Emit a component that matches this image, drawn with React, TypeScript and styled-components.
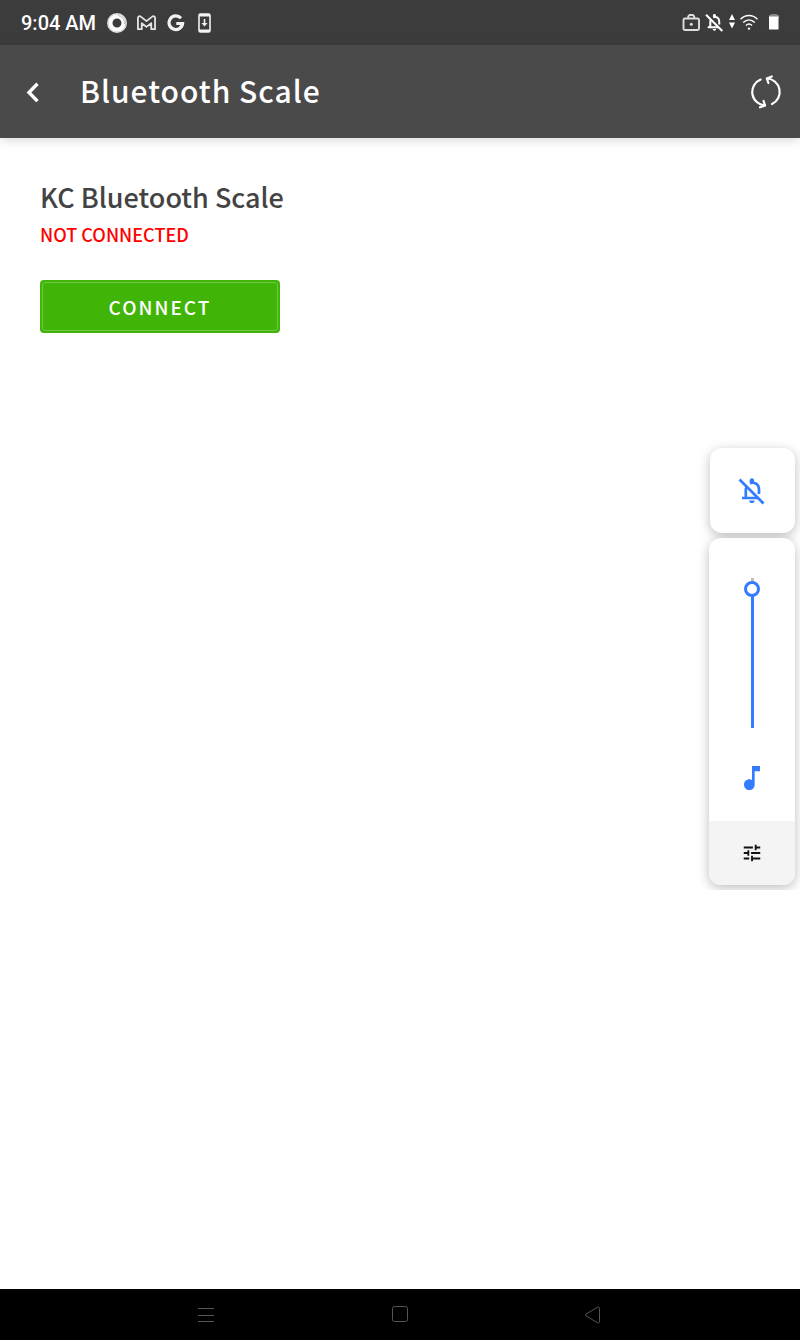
import React, { useState } from "react";
import styled, { createGlobalStyle } from "styled-components";
import { MdTune, MdMusicNote } from "react-icons/md";

const GlobalStyle = createGlobalStyle`
  *, *::before, *::after { box-sizing: border-box; }
  body {
    margin: 0;
    background: #ffffff;
    color: #434343;
    font-family: "Noto Sans CJK SC", "Noto Sans", sans-serif;
  }
  svg { display: block; flex: none; }
`;

const Screen = styled.div`
  position: relative;
  display: flex;
  flex-direction: column;
  min-height: 100vh;
`;

const StatusBar = styled.div`
  display: flex;
  align-items: center;
  justify-content: space-between;
  height: 45px;
  padding: 0 21px;
  background: #3c3c3c;
  color: #ffffff;
`;

const StatusGroup = styled.div<{ $gap: number }>`
  display: flex;
  align-items: center;
  gap: ${(p) => p.$gap}px;
`;

const Clock = styled.time`
  font: 500 20px/24px Roboto, sans-serif;
`;

const Header = styled.header`
  display: flex;
  align-items: center;
  height: 93px;
  padding: 0 16px;
  background: #4a4a4a;
  color: #ffffff;
  box-shadow: 0 2px 10px rgba(0, 0, 0, 0.16);
`;

const IconButton = styled.button`
  display: grid;
  place-items: center;
  width: 36px;
  height: 48px;
  padding: 0;
  border: 0;
  background: none;
  color: inherit;
  cursor: pointer;
`;

const Title = styled.h1`
  flex: 1;
  margin: 0 0 0 28px;
  padding-bottom: 4px;
  font-size: 30px;
  line-height: 44px;
  font-weight: 500;
  letter-spacing: 1px;
`;

const Main = styled.main`
  flex: 1;
  padding: 40px;
`;

const DeviceName = styled.h2`
  margin: 0;
  font-size: 27px;
  line-height: 38px;
  font-weight: 500;
`;

const DeviceStatus = styled.p`
  margin: 6px 0 34px;
  color: #ff0000;
  font-size: 18px;
  line-height: 24px;
  font-weight: 500;
`;

const ConnectButton = styled.button`
  display: block;
  width: 240px;
  height: 53px;
  padding: 2px;
  border: 0;
  border-radius: 4px;
  background: #41b408;
  color: #ffffff;
  font: inherit;
  font-size: 19px;
  line-height: 47px;
  font-weight: 500;
  letter-spacing: 2px;
  cursor: pointer;
`;

const ConnectLabel = styled.span`
  display: block;
  border: 1px solid #6fc744;
  border-radius: 3px;
`;

const VolumeOverlay = styled.aside`
  position: absolute;
  top: 438px;
  right: 0;
  display: flex;
  flex-direction: column;
  align-items: flex-end;
  gap: 5px;
  padding: 10px 5px 5px 20px;
  overflow: hidden;
`;

const RingerCard = styled.button`
  display: grid;
  place-items: center;
  width: 85px;
  height: 85px;
  padding: 0 2px 0 0;
  border: 0;
  border-radius: 12px;
  background: #ffffff;
  color: #347cff;
  box-shadow: 0 3px 12px rgba(0, 0, 0, 0.26);
  cursor: pointer;
`;

const VolumeCard = styled.div`
  display: flex;
  flex-direction: column;
  align-items: center;
  width: 86px;
  padding-top: 40px;
  border-radius: 12px;
  background: #ffffff;
  color: #347cff;
  box-shadow: 0 3px 12px rgba(0, 0, 0, 0.26);
`;

const VolumeSlider = styled.input`
  appearance: none;
  writing-mode: vertical-lr;
  direction: rtl;
  width: 16px;
  height: 150px;
  margin: 0 0 34px;
  background: none;

  &::-webkit-slider-runnable-track {
    width: 3px;
    background: linear-gradient(#bdbdbd 4px, #347cff 4px);
  }
  &::-webkit-slider-thumb {
    appearance: none;
    width: 16px;
    height: 16px;
    margin-left: -7px;
    border: 3px solid #347cff;
    border-radius: 50%;
    background: #ffffff;
  }
`;

const SettingsButton = styled.button`
  display: grid;
  place-items: center;
  width: 100%;
  height: 64px;
  margin-top: 27px;
  padding: 0;
  border: 0;
  border-radius: 0 0 12px 12px;
  background: #f4f4f4;
  color: #111111;
  cursor: pointer;
`;

const NavBar = styled.nav`
  display: flex;
  align-items: center;
  justify-content: center;
  gap: 158px;
  height: 51px;
  background: #000000;
  color: #555555;
`;

const BellOff = ({ size, weight }: { size: number; weight: number }) => (
  <svg width={size} height={size} viewBox="0 0 28 28" fill="none" stroke="currentColor" strokeWidth={weight} aria-hidden="true">
    <path d="M1.500 2.500 25.500 26.500" />
    <path d="M4 21H20.500M7.800 21V13Q7.800 11 9 9.500M12 6.300C17 4.500 21 7.500 21 12.500V17" />
    <path d="M11.700 5.500V3.500a2.200 2.200 0 0 1 4.400 0v2Z" fill="currentColor" stroke="none" />
    <path d="M11.300 23.500h5.200a2.600 2.600 0 0 1-5.200 0Z" fill="currentColor" stroke="none" />
  </svg>
);

const ChatRing = () => (
  <svg width="20" height="20" viewBox="0 0 20 20" fill="none" aria-hidden="true">
    <circle cx="10" cy="10" r="9.300" stroke="#dcdcdc" strokeWidth="1.400" />
    <circle cx="10" cy="10" r="6.600" stroke="#fff" strokeWidth="4.200" />
    <path d="M11 2.500a7.500 7.500 0 0 1 6.500 8.500" stroke="#aaa" strokeWidth=".8" />
  </svg>
);

const Mail = () => (
  <svg width="19" height="16" viewBox="0 0 20 16" fill="none" stroke="#e6e6e6" strokeWidth="1.900" strokeLinejoin="round" aria-hidden="true">
    <path d="M1 14.500V2.600C1 .9 2.800.3 4 1.300L10 6l6-4.700c1.200-1 3-.4 3 1.300v11.900h-4V8.200l-5 3.900-5-3.900v6.300Z" />
  </svg>
);

const SearchG = () => (
  <svg width="20" height="18" viewBox="-1 0 20 18" fill="none" stroke="#f2f2f2" strokeWidth="3.200" aria-hidden="true">
    <path d="M14 4.300A6.800 6.800 0 1 0 15.600 9.500H9.300" />
  </svg>
);

const PhoneDownload = () => (
  <svg width="18" height="20" viewBox="-2 0 18 20" fill="none" aria-hidden="true">
    <rect x="1" y="1" width="11" height="18" rx="1.500" stroke="#f2f2f2" strokeWidth="1.600" />
    <path d="M1 2.200h11M1 17.800h11" stroke="#f2f2f2" strokeWidth="2.400" />
    <path d="M6.500 6v6" stroke="#f2f2f2" strokeWidth="1.600" />
    <path d="M3.400 10h6.200L6.500 13.400Z" fill="#f2f2f2" />
  </svg>
);

const Briefcase = () => (
  <svg width="18" height="18" viewBox="0 0 18 18" fill="none" stroke="#dedede" strokeWidth="1.900" aria-hidden="true">
    <rect x="1.500" y="4.500" width="15.500" height="11.500" rx="1.500" />
    <path d="M6.300 4.500V2.300L7.600 1h3.300L12.200 2.300V4.500" />
    <circle cx="9.300" cy="10.200" r="1.500" fill="#dedede" stroke="none" />
  </svg>
);

const DataArrows = () => (
  <svg width="6" height="18" viewBox="0 0 6 18" fill="#fff" aria-hidden="true">
    <path d="M3 0 6 6H0ZM0 8.500h6l-3 6Z" />
  </svg>
);

const Wifi = () => (
  <svg width="18" height="18" viewBox="0 0 18 18" fill="none" stroke="#fff" strokeWidth="1.400" aria-hidden="true">
    <path d="M.5 5.200C5.500.3 12.500.3 17.500 5.200M3.200 8.400c3.500-3.300 8.100-3.300 11.600 0M5.900 11.400c1.900-1.700 4.300-1.700 6.200 0" />
    <circle cx="9" cy="14.600" r="1.200" fill="#fff" stroke="none" />
  </svg>
);

const Battery = () => (
  <svg width="16" height="18" viewBox="-6 0 16 18" aria-hidden="true">
    <path d="M2 0h6v1h2v3H0V1h2Z" fill="#888" />
    <path d="M0 2.500h9.500V15.500H0Z" fill="#fff" />
  </svg>
);

const Chevron = () => (
  <svg width="16" height="20" viewBox="0 0 16 20" fill="none" stroke="currentColor" strokeWidth="3.400" aria-hidden="true">
    <path d="M11.500 1.800 3 10.500 11.500 19.200" />
  </svg>
);

const Refresh = () => (
  <svg width="32" height="34" viewBox="0 0 32 34" fill="none" stroke="currentColor" strokeWidth="2.200" strokeLinecap="round" strokeLinejoin="round" aria-hidden="true">
    <path d="M10.600 4.600A13.400 13.400 0 0 0 15 30.400" />
    <path d="M13.600 26 15 30.400 10 32.300" />
    <path d="M22 29A13.400 13.400 0 0 0 17 3.500" />
    <path d="M18.400 8 16.800 3.500 21.800 1.500" />
  </svg>
);

export default function App() {
  const [volume, setVolume] = useState(98);
  return (
    <>
      <GlobalStyle />
      <Screen>
        <StatusBar>
          <StatusGroup $gap={11}>
            <Clock>9:04 AM</Clock>
            <StatusGroup $gap={10}>
              <ChatRing />
              <Mail />
              <SearchG />
              <PhoneDownload />
            </StatusGroup>
          </StatusGroup>
          <StatusGroup $gap={5}>
            <Briefcase />
            <BellOff size={19} weight={3} />
            <DataArrows />
            <Wifi />
            <Battery />
          </StatusGroup>
        </StatusBar>
        <Header>
          <IconButton aria-label="Back">
            <Chevron />
          </IconButton>
          <Title>Bluetooth Scale</Title>
          <IconButton aria-label="Refresh">
            <Refresh />
          </IconButton>
        </Header>
        <Main>
          <DeviceName>KC Bluetooth Scale</DeviceName>
          <DeviceStatus>NOT CONNECTED</DeviceStatus>
          <ConnectButton>
            <ConnectLabel>CONNECT</ConnectLabel>
          </ConnectButton>
        </Main>
        <VolumeOverlay>
          <RingerCard aria-label="Ringer off">
            <BellOff size={28} weight={2.7} />
          </RingerCard>
          <VolumeCard>
            <VolumeSlider
              type="range"
              aria-label="Media volume"
              min={0}
              max={100}
              value={volume}
              onChange={(e) => setVolume(Number(e.target.value))}
            />
            <MdMusicNote size={32} aria-hidden="true" />
            <SettingsButton aria-label="Sound settings">
              <MdTune size={22} />
            </SettingsButton>
          </VolumeCard>
        </VolumeOverlay>
        <NavBar>
          <IconButton aria-label="Recent apps">
            <svg width="18" height="18" viewBox="0 0 18 18" stroke="currentColor" aria-hidden="true">
              <path d="M1 2.500h16M1 9.500h16M1 15.500h16" />
            </svg>
          </IconButton>
          <IconButton aria-label="Home">
            <svg width="18" height="18" viewBox="0 0 18 18" fill="none" stroke="currentColor" aria-hidden="true">
              <rect x="1.500" y=".5" width="15" height="15" rx="2" />
            </svg>
          </IconButton>
          <IconButton aria-label="Back to previous screen">
            <svg width="18" height="18" viewBox="0 0 18 18" fill="none" stroke="currentColor" strokeLinejoin="round" aria-hidden="true">
              <path d="M1 8 12.500 1.300q2-.8 2 1.200v13q0 2-2 1.200L1 10q-1.200-1 0-2Z" />
            </svg>
          </IconButton>
        </NavBar>
      </Screen>
    </>
  );
}
